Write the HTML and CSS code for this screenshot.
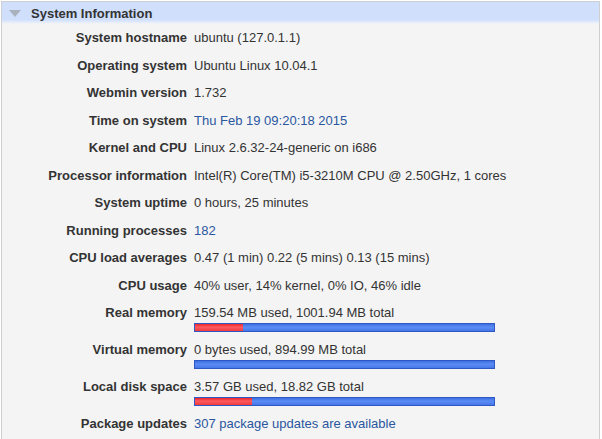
FILE: index.html
```html
<!DOCTYPE html>
<html lang="en">
<head>
    <meta charset="UTF-8">
    <title>System Information</title>
    <link rel="stylesheet" href="styles.css">
</head>
<body>
    <div class="panel">
        <div class="panel-head">
            <span class="arrow"></span>
            <span class="panel-title">System Information</span>
        </div>

        <div class="info">
            <div class="label">System hostname</div>
            <div class="value">ubuntu (127.0.1.1)</div>

            <div class="label">Operating system</div>
            <div class="value">Ubuntu Linux 10.04.1</div>

            <div class="label">Webmin version</div>
            <div class="value">1.732</div>

            <div class="label">Time on system</div>
            <div class="value"><a href="#">Thu Feb 19 09:20:18 2015</a></div>

            <div class="label">Kernel and CPU</div>
            <div class="value">Linux 2.6.32-24-generic on i686</div>

            <div class="label">Processor information</div>
            <div class="value">Intel(R) Core(TM) i5-3210M CPU @ 2.50GHz, 1 cores</div>

            <div class="label">System uptime</div>
            <div class="value">0 hours, 25 minutes</div>

            <div class="label">Running processes</div>
            <div class="value"><a href="#">182</a></div>

            <div class="label">CPU load averages</div>
            <div class="value">0.47 (1 min) 0.22 (5 mins) 0.13 (15 mins)</div>

            <div class="label">CPU usage</div>
            <div class="value">40% user, 14% kernel, 0% IO, 46% idle</div>

            <div class="label">Real memory</div>
            <div class="value">
                159.54 MB used, 1001.94 MB total
                <div class="bar"><div class="bar-used" style="width: 16%"></div></div>
            </div>

            <div class="label">Virtual memory</div>
            <div class="value">
                0 bytes used, 894.99 MB total
                <div class="bar"><div class="bar-used" style="width: 0%"></div></div>
            </div>

            <div class="label">Local disk space</div>
            <div class="value">
                3.57 GB used, 18.82 GB total
                <div class="bar"><div class="bar-used" style="width: 19%"></div></div>
            </div>

            <div class="label">Package updates</div>
            <div class="value"><a href="#">307 package updates are available</a></div>
        </div>
    </div>
</body>
</html>
```

FILE: styles.css
```css
body {
    margin: 0;
    background-color: #fff;
    font-family: "Liberation Sans", Arial, sans-serif;
    font-size: 13px;
    color: #333;
}

.panel {
    margin: 1px 2px 0 1px;
    border: 1px solid #cfcfcf;
    border-bottom: none;
    background-color: #f4f4f4;
    height: 438px;
    box-sizing: border-box;
    overflow: hidden;
}

.panel-head {
    display: flex;
    align-items: center;
    height: 22px;
    background: linear-gradient(#cfdffc 0%, #cfdffc 80%, #e4ecfa 92%, #f4f4f4 100%);
}

.arrow {
    width: 0;
    height: 0;
    margin: 1px 10px 0 7px;
    border-left: 6px solid transparent;
    border-right: 6px solid transparent;
    border-top: 7px solid #a9b1bd;
}

.panel-title {
    font-weight: bold;
    color: #333;
    line-height: 15px;
}

.info {
    display: grid;
    grid-template-columns: 185px 1fr;
    column-gap: 7px;
}

.label {
    text-align: right;
    font-weight: bold;
    line-height: 15px;
    padding: 6.25px 0;
}

.value {
    line-height: 15px;
    padding: 6.25px 0;
}

.value a {
    color: #2a579f;
    text-decoration: none;
}

.bar {
    width: 299px;
    height: 7px;
    margin: 3px 0 -2.5px 0;
    border: 1px solid #2f58c4;
    background: linear-gradient(#3c6fe0 0%, #5b8cf5 45%, #4677e8 100%);
}

.bar-used {
    height: 100%;
    background: linear-gradient(#e8262c 0%, #ff5a5e 45%, #ee3a3e 100%);
}
```
